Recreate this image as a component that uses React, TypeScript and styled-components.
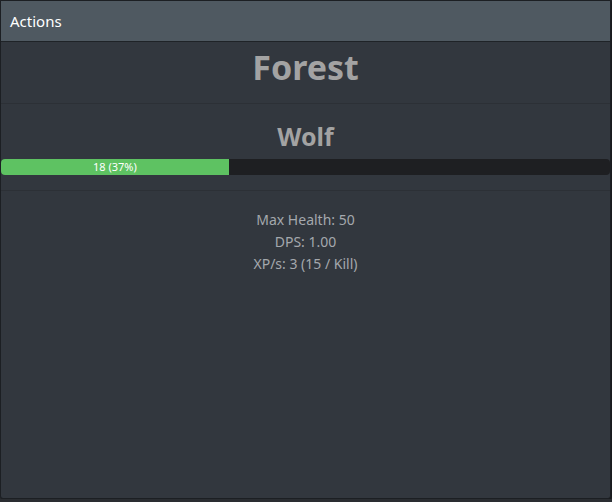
import React from "react";
import styled, { createGlobalStyle } from "styled-components";

const Global = createGlobalStyle`
  html, body { margin: 0; padding: 0; background: #2a2d31; }
  body { font-family: "Noto Sans", "Open Sans", "Liberation Sans", sans-serif; }
`;

const Panel = styled.div`
  width: 609px;
  height: 497px;
  background: #32373e;
  border: 1px solid #1c1f23;
  border-radius: 0 0 3px 3px;
  box-shadow: 1px 1px 3px rgba(0, 0, 0, 0.6);
  display: flex;
  flex-direction: column;
`;

const Header = styled.div`
  height: 40px;
  background: #4f5961;
  border-bottom: 1px solid #1f2327;
  display: flex;
  align-items: center;
  padding-left: 9px;
  color: #ffffff;
  font-size: 15px;
`;

const Section = styled.div<{ $pad: string }>`
  padding: ${(p) => p.$pad};
  border-bottom: 1px solid #2c3036;
  display: flex;
  flex-direction: column;
  align-items: center;
`;

const Title = styled.div<{ $size: number }>`
  font-size: ${(p) => p.$size}px;
  font-weight: 700;
  color: #a3a3a3;
  line-height: 1.2;
`;

const Bar = styled.div`
  align-self: stretch;
  height: 16px;
  margin-top: 8px;
  background: #1e1f22;
  border-radius: 4px;
  overflow: hidden;
  display: flex;
`;

const Fill = styled.div`
  background: #5ec262;
  color: #ffffff;
  font-size: 11px;
  display: flex;
  align-items: center;
  justify-content: center;
`;

const Stats = styled.div`
  padding-top: 18px;
  display: flex;
  flex-direction: column;
  align-items: center;
  color: #a4a8ad;
  font-size: 14px;
  line-height: 22px;
`;

export default function App() {
  return (
    <>
      <Global />
      <Panel>
        <Header>Actions</Header>
        <Section $pad="5px 0 15px">
          <Title $size={34}>Forest</Title>
        </Section>
        <Section $pad="17px 0 15px">
          <Title $size={25}>Wolf</Title>
          <Bar>
            <Fill style={{ width: "37.4%" }}>18 (37%)</Fill>
          </Bar>
        </Section>
        <Stats>
          <div>Max Health: 50</div>
          <div>DPS: 1.00</div>
          <div>XP/s: 3 (15 / Kill)</div>
        </Stats>
      </Panel>
    </>
  );
}
